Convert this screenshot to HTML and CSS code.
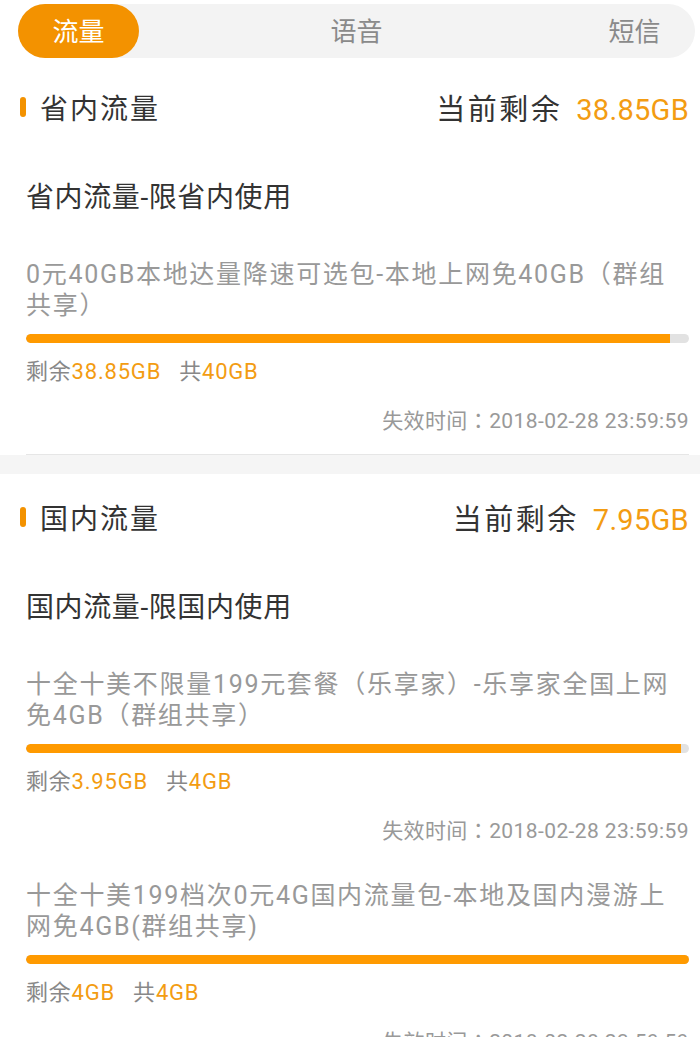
FILE: index.html
```html
<!DOCTYPE html>
<html>
<head>
	<title>流量查询</title>
	<meta charset="utf-8">
	<link rel="stylesheet" href="styles.css">
</head>
<body>
<div class="tabbar">
	<div class="tabs">
		<div class="tab on">流量</div>
		<div class="tab">语音</div>
		<div class="tab">短信</div>
	</div>
</div>

<div class="block">
	<div class="head">
		<div class="name">省内流量</div>
		<div class="left">当前剩余<span class="num">38.85GB</span></div>
	</div>
	<div class="title">省内流量-限省内使用</div>
	<div class="pkg">
		<div class="desc">0元40GB本地达量降速可选包-本地上网免40GB（群组共享）</div>
		<div class="bar"><div class="fill" style="width:97.1%"></div></div>
		<div class="stat">剩余<span class="num">38.85GB</span><em></em>共<span class="num">40GB</span></div>
		<div class="expire">失效时间：2018-02-28 23:59:59</div>
	</div>
</div>
<div class="gap"></div>

<div class="block">
	<div class="head">
		<div class="name">国内流量</div>
		<div class="left">当前剩余<span class="num">7.95GB</span></div>
	</div>
	<div class="title">国内流量-限国内使用</div>
	<div class="pkg">
		<div class="desc">十全十美不限量199元套餐（乐享家）-乐享家全国上网免4GB（群组共享）</div>
		<div class="bar"><div class="fill" style="width:98.75%"></div></div>
		<div class="stat">剩余<span class="num">3.95GB</span><em></em>共<span class="num">4GB</span></div>
		<div class="expire">失效时间：2018-02-28 23:59:59</div>
	</div>
	<div class="pkg">
		<div class="desc">十全十美199档次0元4G国内流量包-本地及国内漫游上网免4GB(群组共享)</div>
		<div class="bar"><div class="fill" style="width:100%"></div></div>
		<div class="stat">剩余<span class="num">4GB</span><em></em>共<span class="num">4GB</span></div>
		<div class="expire">失效时间：2018-02-28 23:59:59</div>
	</div>
</div>
</body>
</html>
```

FILE: styles.css
```css
*{
	margin: 0;
	padding: 0;
}
body{
	background: #fff;
	font-family: Roboto, "Noto Sans CJK SC", sans-serif;
	color: #333;
	overflow: hidden;
}
/* 顶部切换 */
.tabbar{
	height: 64px;
	padding: 4px 5px 0 18px;
	box-sizing: border-box;
}
.tabs{
	display: flex;
	justify-content: space-between;
	height: 54px;
	background: #f3f3f3;
	border-radius: 27px;
}
.tab{
	width: 121px;
	line-height: 56px;
	text-align: center;
	font-size: 26px;
	color: #8a8a8a;
	border-radius: 27px;
}
.tab.on{
	background: #f39200;
	color: #fff;
}
/* 分类块 */
.block{
	margin: 0 11px 0 26px;
	padding-bottom: 18px;
	border-bottom: 1px solid #e6e6e6;
}
.block:last-child{
	border-bottom: none;
}
.head{
	display: flex;
	justify-content: space-between;
	align-items: center;
	height: 56px;
	margin: 15px 0 0 -6px;
	font-size: 28px;
	color: #333;
}
.name{
	display: flex;
	align-items: center;
	letter-spacing: 2px;
}
.name::before{
	content: "";
	width: 6px;
	height: 20px;
	border-radius: 3px;
	background: #f39200;
	margin-right: 14px;
}
.left{
	font-size: 29px;
	letter-spacing: 2.5px;
}
.head .num{
	color: #f39c12;
	margin-left: 14px;
	letter-spacing: 0.3px;
}
.title{
	margin-top: 43px;
	line-height: 40px;
	font-size: 28px;
	letter-spacing: 0.6px;
	color: #333;
	margin-bottom: 7px;
}
.pkg{
	padding-top: 34px;
}
.desc{
	font-size: 25px;
	letter-spacing: 1.7px;
	line-height: 31px;
	color: #999;
}
.bar{
	margin-top: 13px;
	height: 9px;
	border-radius: 5px;
	background: #e2e2e2;
	overflow: hidden;
}
.fill{
	height: 100%;
	background: #ff9a00;
	border-radius: 5px 0 0 5px;
}
.stat{
	margin-top: 14px;
	line-height: 30px;
	font-size: 22px;
	letter-spacing: 0.8px;
	color: #888;
}
.stat .num{
	color: #f39c12;
}
.stat em{
	display: inline-block;
	width: 18px;
}
.expire{
	margin-top: 19px;
	line-height: 30px;
	font-family: Roboto, "Noto Sans CJK TC", sans-serif;
	font-size: 21px;
	letter-spacing: 0.4px;
	color: #999;
	text-align: right;
}
.gap{
	height: 19px;
	background: #f5f5f5;
}
```
